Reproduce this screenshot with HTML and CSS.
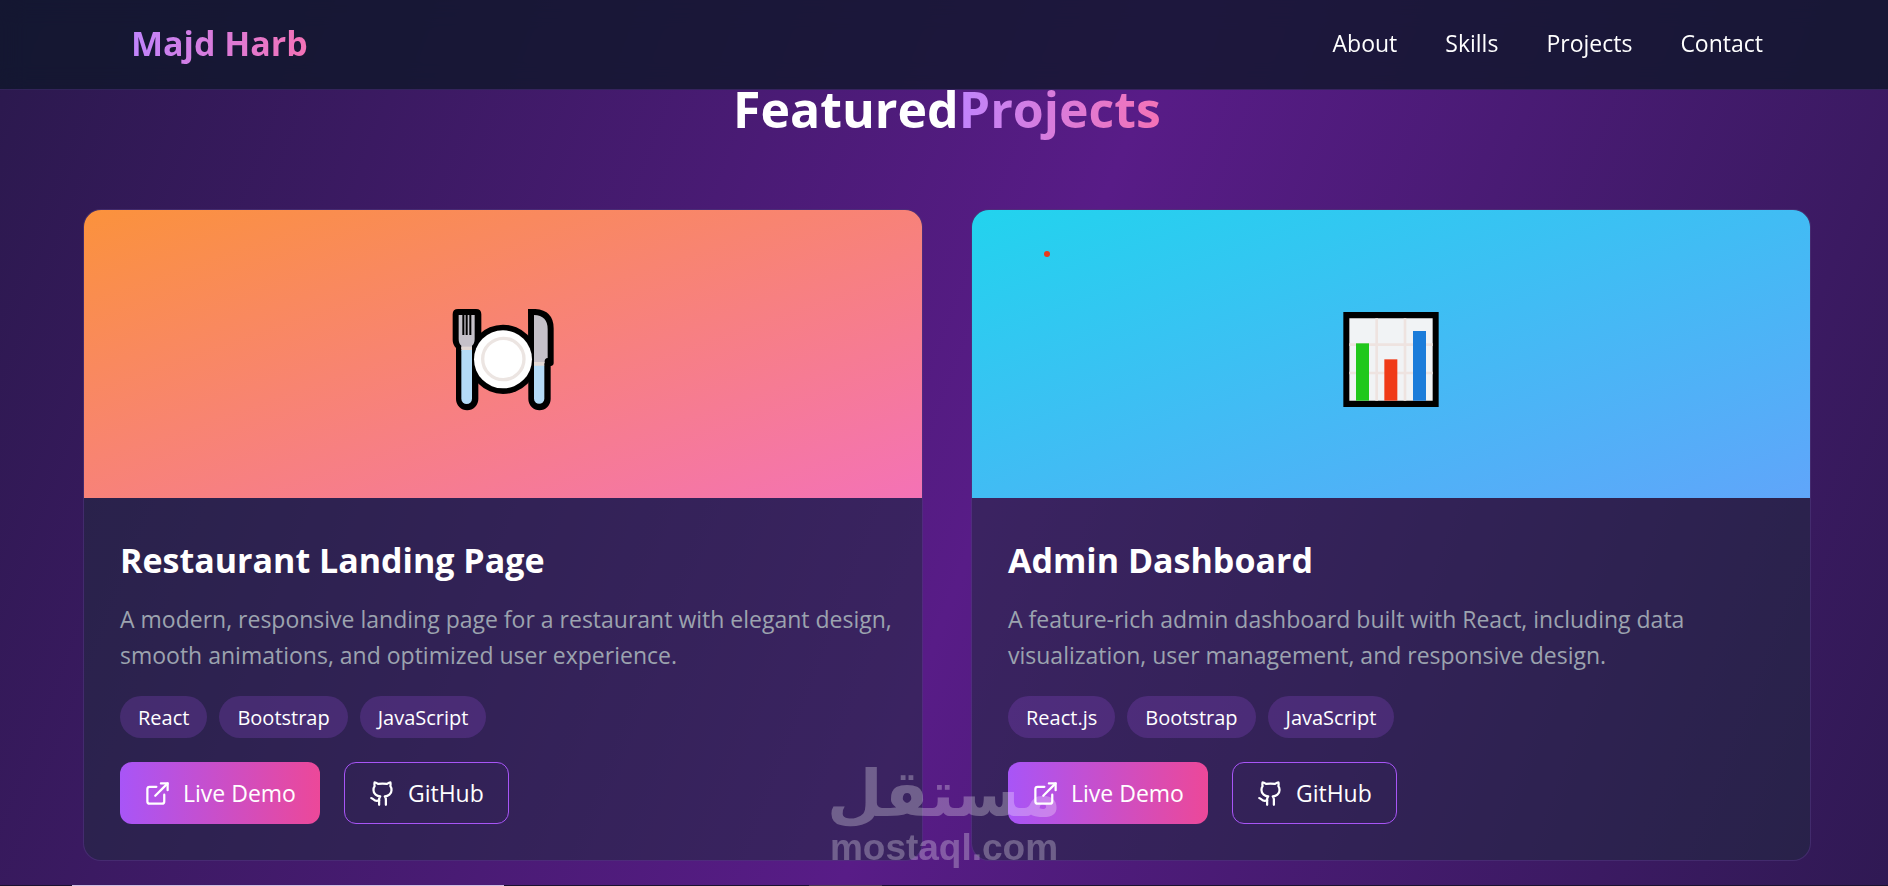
FILE: index.html
```html
<!DOCTYPE html>
<html lang="en">
<head>
    <meta charset="UTF-8">
    <meta name="viewport" content="width=device-width, initial-scale=1.0">
    <title>Majd Harb</title>
    <link rel="stylesheet" href="styles.css">
</head>
<body>
    <svg class="sprite" aria-hidden="true">
        <symbol id="icon-external" viewBox="0 0 24 24">
            <path d="M15 3h6v6"/>
            <path d="M10 14 21 3"/>
            <path d="M18 13v6a2 2 0 0 1-2 2H5a2 2 0 0 1-2-2V8a2 2 0 0 1 2-2h6"/>
        </symbol>
        <symbol id="icon-github" viewBox="0 0 24 24">
            <path d="M15 22v-4a4.8 4.8 0 0 0-1-3.5c3 0 6-2 6-5.5.08-1.25-.27-2.48-1-3.5.28-1.15.28-2.35 0-3.5 0 0-1 0-3 1.5-2.64-.5-5.36-.5-8 0C6 2 5 2 5 2c-.3 1.15-.3 2.35 0 3.5A5.403 5.403 0 0 0 4 9c0 3.5 3 5.5 6 5.5-.39.49-.68 1.05-.85 1.65-.17.6-.22 1.23-.15 1.85v4"/>
            <path d="M9 18c-4.51 2-5-2-7-2"/>
        </symbol>
    </svg>

    <header class="navbar">
        <a class="logo" href="#home">Majd Harb</a>
        <nav class="nav-links">
            <a href="#about">About</a>
            <a href="#skills">Skills</a>
            <a href="#projects">Projects</a>
            <a href="#contact">Contact</a>
        </nav>
    </header>

    <main class="projects" id="projects">
        <h2 class="section-title">Featured<span>Projects</span></h2>

        <div class="project-grid">
            <article class="card">
                <div class="card-image restaurant">
                    <svg class="card-emoji" viewBox="39 12 360 360" aria-hidden="true">
                        <circle cx="219" cy="208" r="104" fill="#000"/>
                        <!-- fork -->
                        <path d="M84 57h54q16 0 16 16v78q0 14-9 23v153a33 33 0 0 1-67 0V174q-10-10-10-24V73q0-16 16-16z" fill="#000"/>
                        <path d="M86 75h48v72q0 14-8 20v10H94v-10q-8-6-8-20z" fill="#c5c1c9"/>
                        <path d="M100 75v60M110 75v60M121 75v60" stroke="#000" stroke-width="6"/>
                        <path d="M94 170h32v12H94z" fill="#e2d9d5"/>
                        <path d="M94 180h32v146a16 16 0 0 1-32 0z" fill="#b4dbf7"/>
                        <!-- knife -->
                        <path d="M294 57h22q55 4 55 58v104q0 8-9 9v99a33 33 0 0 1-67 0z" fill="#000"/>
                        <path d="M312 75q41 2 41 42v87q-9 1-9 10v6h-32z" fill="#c5c1c9"/>
                        <path d="M312 216h31v12h-31z" fill="#e2d9d5"/>
                        <path d="M312 227h31v99a15 15 0 0 1-31 0z" fill="#b4dbf7"/>
                        <!-- plate -->
                        <circle cx="219" cy="208" r="87" fill="#fff"/>
                        <circle cx="220" cy="207" r="62" fill="none" stroke="#ece5e2" stroke-width="10"/>
                    </svg>
                </div>
                <div class="card-body">
                    <h3>Restaurant Landing Page</h3>
                    <p>A modern, responsive landing page for a restaurant with elegant design, smooth animations, and optimized user experience.</p>
                    <ul class="tags">
                        <li>React</li>
                        <li>Bootstrap</li>
                        <li>JavaScript</li>
                    </ul>
                    <div class="actions">
                        <a class="btn btn-primary" href="#demo"><svg class="icon"><use href="#icon-external"/></svg>Live Demo</a>
                        <a class="btn btn-outline" href="#github"><svg class="icon"><use href="#icon-github"/></svg>GitHub</a>
                    </div>
                </div>
            </article>

            <article class="card">
                <div class="card-image dashboard">
                    <svg class="card-emoji" viewBox="33 12 360 360" aria-hidden="true">
                        <path d="M70 66h286v285H70z" fill="#000"/>
                        <path d="M88 85h250v247H88z" fill="#f1f3f5"/>
                        <path d="M170 85v247M255 85v247M88 164h250M88 249h250" stroke="#eee3e0" stroke-width="8"/>
                        <path d="M108 160h39v172h-39z" fill="#20c81c"/>
                        <path d="M193 208h39v124h-39z" fill="#f03a17"/>
                        <path d="M279 123h39v209h-39z" fill="#1b7cda"/>
                    </svg>
                    <span class="dot"></span>
                </div>
                <div class="card-body">
                    <h3>Admin Dashboard</h3>
                    <p>A feature-rich admin dashboard built with React, including data visualization, user management, and responsive design.</p>
                    <ul class="tags">
                        <li>React.js</li>
                        <li>Bootstrap</li>
                        <li>JavaScript</li>
                    </ul>
                    <div class="actions">
                        <a class="btn btn-primary" href="#demo"><svg class="icon"><use href="#icon-external"/></svg>Live Demo</a>
                        <a class="btn btn-outline" href="#github"><svg class="icon"><use href="#icon-github"/></svg>GitHub</a>
                    </div>
                </div>
            </article>
        </div>
    </main>

    <div class="watermark">
        <span class="watermark-ar" lang="ar" dir="rtl">مستقل</span>
        <span class="watermark-en">mostaql.com</span>
    </div>
    <div class="bottom-line"></div>
</body>
</html>
```

FILE: styles.css
```css
* {
    box-sizing: border-box;
}
body {
    margin: 0;
    min-height: 100vh;
    font-family: "Segoe UI", "Open Sans", "Noto Sans", sans-serif;
    font-size: 23px;
    line-height: 36px;
    color: #fff;
    background: linear-gradient(111deg, #0f172a -32%, #581c87 53%, #0f172a 138%);
}
a {
    color: inherit;
    text-decoration: none;
}
.sprite {
    position: absolute;
    width: 0;
    height: 0;
}

/* Navbar */
.navbar {
    position: fixed;
    top: 0;
    left: 0;
    right: 0;
    z-index: 10;
    display: flex;
    justify-content: space-between;
    align-items: center;
    height: 90px;
    padding: 0 125px 4px 131px;
    background: rgba(15, 23, 42, 0.8);
    backdrop-filter: blur(12px);
    border-bottom: 1px solid rgba(168, 85, 247, 0.2);
}
.logo {
    font-size: 34px;
    line-height: 48px;
    font-weight: bold;
    color: transparent;
    background: linear-gradient(to right, #c084fc, #f472b6);
    background-clip: text;
    -webkit-background-clip: text;
}
.nav-links {
    display: flex;
    gap: 48px;
}

/* Projects */
.projects {
    padding: 79px 24px 24px 30px;
}
.section-title {
    margin: 0 0 70px;
    font-size: 50px;
    line-height: 60px;
    text-align: center;
}
.section-title span {
    color: transparent;
    background: linear-gradient(to right, #c084fc, #f472b6);
    background-clip: text;
    -webkit-background-clip: text;
}
.project-grid {
    display: grid;
    grid-template-columns: 1fr 1fr;
    gap: 48px;
    max-width: 1728px;
    margin: 0 auto;
}
.card {
    overflow: hidden;
    background: rgba(30, 41, 59, 0.5);
    border: 1px solid rgba(168, 85, 247, 0.2);
    border-radius: 18px;
}
.card-image {
    position: relative;
    display: flex;
    justify-content: center;
    align-items: center;
    height: 288px;
}
.restaurant {
    background: linear-gradient(to bottom right, #fb923c, #f472b6);
}
.dashboard {
    background: linear-gradient(to bottom right, #22d3ee, #60a5fa);
}
.card-emoji {
    width: 120px;
    height: 120px;
}
.dot {
    position: absolute;
    top: 41px;
    left: 72px;
    width: 6px;
    height: 6px;
    background: #e8391c;
    border-radius: 50%;
}
.card-body {
    padding: 38px 24px 36px 36px;
}
.card-body h3 {
    margin: 0 0 17px;
    font-size: 34px;
    line-height: 48px;
}
.card-body p {
    margin: 0 0 23px;
    color: #9ca3af;
}
.tags {
    display: flex;
    flex-wrap: wrap;
    gap: 12px;
    margin: 0 0 24px;
    padding: 0;
    list-style: none;
}
.tags li {
    padding: 7px 18px 5px;
    font-size: 20px;
    line-height: 30px;
    background: rgba(168, 85, 247, 0.2);
    border-radius: 21px;
}
.actions {
    display: flex;
    gap: 24px;
}
.btn {
    display: flex;
    align-items: center;
    gap: 12px;
    height: 62px;
    padding: 0 24px;
    border-radius: 12px;
}
.btn-primary {
    background: linear-gradient(to right, #a855f7, #ec4899);
}
.btn-outline {
    border: 1px solid #a855f7;
}
.icon {
    width: 27px;
    height: 27px;
    fill: none;
    stroke: currentColor;
    stroke-width: 2;
    stroke-linecap: round;
    stroke-linejoin: round;
}

/* Watermark */
.watermark {
    position: fixed;
    bottom: 20px;
    left: 50%;
    z-index: 20;
    display: flex;
    flex-direction: column;
    align-items: center;
    transform: translateX(-50%);
    opacity: 0.28;
    pointer-events: none;
}
.watermark-ar {
    font-family: "DejaVu Sans", sans-serif;
    font-size: 64px;
    line-height: 72px;
    font-weight: bold;
}
.watermark-en {
    font-family: "Liberation Sans", Arial, sans-serif;
    font-size: 37px;
    line-height: 36px;
    font-weight: bold;
}
.bottom-line {
    position: fixed;
    bottom: 0;
    left: 0;
    right: 0;
    height: 1px;
    background: linear-gradient(to right, #1a1230 72px, #cdbfe0 72px, #cdbfe0 504px, #1a1230 504px, #1a1230 809px, #4a3a50 809px, #4a3a50 882px, #1a1230 882px);
}
```
